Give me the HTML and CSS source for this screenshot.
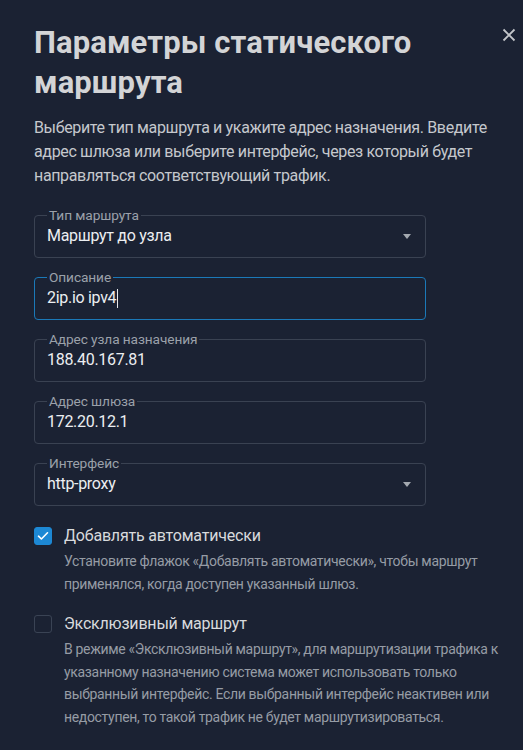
FILE: index.html
```html
<!DOCTYPE html>
<html lang="ru">
<head>
<meta charset="utf-8">
<title>Параметры статического маршрута</title>
<link rel="stylesheet" href="styles.css">
</head>
<body>
<div class="dialog">
  <button class="close" aria-label="Закрыть">
    <svg width="14" height="14" viewBox="0 0 14 14"><path d="M1.5 1.5 L12.5 12.5 M12.5 1.5 L1.5 12.5" stroke="currentColor" stroke-width="1.8" fill="none"/></svg>
  </button>
  <h1 class="title">Параметры статического маршрута</h1>
  <p class="desc">Выберите тип маршрута и укажите адрес назначения. Введите адрес шлюза или выберите интерфейс, через который будет направляться соответствующий трафик.</p>

  <div class="fields">
    <fieldset class="field">
      <legend>Тип маршрута</legend>
      <div class="value select">Маршрут до узла<span class="arrow"></span></div>
    </fieldset>
    <fieldset class="field focused">
      <legend>Описание</legend>
      <div class="value">2ip.io ipv4<span class="caret"></span></div>
    </fieldset>
    <fieldset class="field">
      <legend>Адрес узла назначения</legend>
      <div class="value">188.40.167.81</div>
    </fieldset>
    <fieldset class="field">
      <legend>Адрес шлюза</legend>
      <div class="value">172.20.12.1</div>
    </fieldset>
    <fieldset class="field">
      <legend>Интерфейс</legend>
      <div class="value select">http-proxy<span class="arrow"></span></div>
    </fieldset>
  </div>

  <div class="checks">
    <div class="check">
      <span class="box checked">
        <svg width="12" height="10" viewBox="0 0 12 10"><path d="M1.5 5.2 L4.4 8 L10.5 1.8" stroke="#fff" stroke-width="1.6" fill="none" stroke-linecap="round" stroke-linejoin="round"/></svg>
      </span>
      <div class="check-text">
        <div class="check-label">Добавлять автоматически</div>
        <div class="check-help">Установите флажок «Добавлять автоматически», чтобы маршрут применялся, когда доступен указанный шлюз.</div>
      </div>
    </div>
    <div class="check">
      <span class="box"></span>
      <div class="check-text">
        <div class="check-label">Эксклюзивный маршрут</div>
        <div class="check-help">В режиме «Эксклюзивный маршрут», для маршрутизации трафика к указанному назначению система может использовать только выбранный интерфейс. Если выбранный интерфейс неактивен или недоступен, то такой трафик не будет маршрутизироваться.</div>
      </div>
    </div>
  </div>
</div>
</body>
</html>
```

FILE: styles.css
```css
* { box-sizing: border-box; }
html, body {
  margin: 0;
  padding: 0;
  background: #1b2233;
}
body {
  font-family: Roboto, "Noto Sans", sans-serif;
  color: #d4d6da;
}
.dialog {
  position: relative;
  padding: 23px 20px 20px 34px;
  min-height: 750px;
}
.close {
  position: absolute;
  top: 28px;
  right: 7px;
  width: 14px;
  height: 14px;
  padding: 0;
  border: 0;
  background: none;
  color: #c4c6ca;
  display: flex;
}
.title {
  margin: 0;
  font-size: 31px;
  line-height: 40px;
  font-weight: 700;
  color: #d3d4d6;
  letter-spacing: 0.1px;
}
.desc {
  margin: 13px 0 0;
  font-size: 16px;
  line-height: 24px;
  color: #c5c8cd;
  letter-spacing: -0.35px;
}
.fields {
  margin-top: 19px;
  display: flex;
  flex-direction: column;
  gap: 11px;
  width: 392px;
}
.field {
  margin: 0;
  padding: 0 12px 8px 12px;
  border: 1px solid #3a4252;
  border-radius: 4px;
  min-width: 0;
}
.field legend {
  font-size: 13.7px;
  line-height: 16px;
  color: #9ba1aa;
  padding: 0 2px;
  margin-left: 0;
  letter-spacing: -0.1px;
}
.field.focused {
  border-color: #1b79b8;
}
.value {
  height: 26px;
  line-height: 26px;
  font-size: 16px;
  color: #eceef1;
  display: flex;
  align-items: center;
  letter-spacing: -0.3px;
}
.select {
  justify-content: space-between;
}
.arrow {
  width: 0;
  height: 0;
  border-left: 4px solid transparent;
  border-right: 4px solid transparent;
  border-top: 5px solid #a4a9b0;
  margin-right: 2px;
}
.caret {
  display: inline-block;
  width: 1px;
  height: 19px;
  background: #e6e8eb;
  margin-left: 1px;
}
.checks {
  margin-top: 20px;
  display: flex;
  flex-direction: column;
  gap: 19px;
}
.check {
  display: flex;
  gap: 12px;
  align-items: flex-start;
}
.box {
  flex: none;
  width: 18px;
  height: 18px;
  border-radius: 3px;
  border: 1.5px solid #3a4354;
  margin-top: 1px;
  display: flex;
  align-items: center;
  justify-content: center;
}
.box.checked {
  background: #1d88d4;
  border-color: #1d88d4;
}
.check-label {
  font-size: 16px;
  line-height: 20px;
  color: #d8dadd;
  letter-spacing: -0.2px;
}
.check-help {
  margin-top: 4px;
  font-size: 14px;
  line-height: 22.6px;
  color: #969ca5;
  letter-spacing: -0.33px;
}
```
